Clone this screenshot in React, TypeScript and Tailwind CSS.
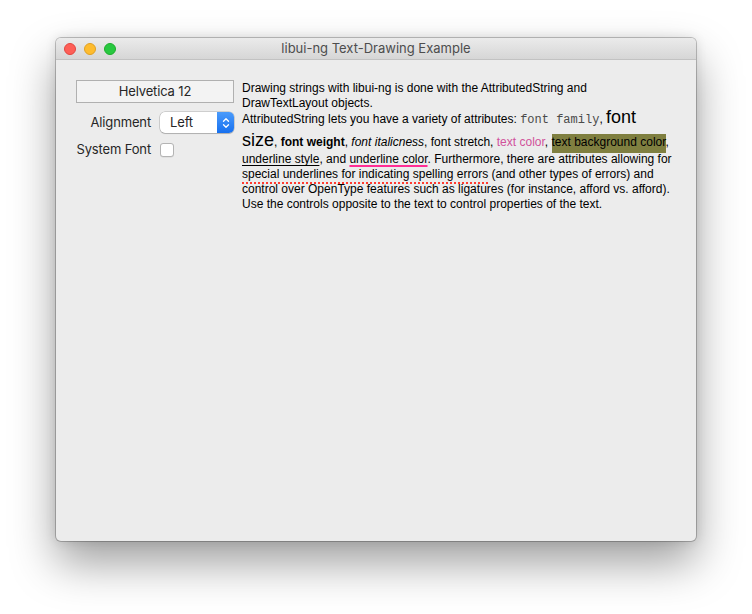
import React from "react";

const ui = { fontFamily: '"Inter", "Liberation Sans", sans-serif' };
const body = { fontFamily: '"Liberation Sans", Arial, sans-serif' };
const mono = { fontFamily: '"Liberation Mono", "Courier New", monospace' };

function TrafficLights() {
  return (
    <div className="flex items-center gap-[8px] pl-[8px]">
      <span className="w-[12px] h-[12px] rounded-full bg-[#fe5f57] border border-[#e2463f]" />
      <span className="w-[12px] h-[12px] rounded-full bg-[#febc2e] border border-[#dfa023]" />
      <span className="w-[12px] h-[12px] rounded-full bg-[#28c840] border border-[#1dad2b]" />
    </div>
  );
}

function Chevrons() {
  return (
    <svg width="8" height="12" viewBox="0 0 8 12" fill="none">
      <path d="M1.5 4.2 L4 1.7 L6.5 4.2" stroke="white" strokeWidth="1.3" strokeLinecap="round" strokeLinejoin="round" />
      <path d="M1.5 7.8 L4 10.3 L6.5 7.8" stroke="white" strokeWidth="1.3" strokeLinecap="round" strokeLinejoin="round" />
    </svg>
  );
}

function Controls() {
  return (
    <div className="w-[158px] flex flex-col text-[13px] text-[#262626] tracking-[-0.15px]" style={ui}>
      <div className="h-[23px] w-[158px] flex items-center justify-center bg-[#f3f3f3] border border-[#b0b0b0]">
        Helvetica 12
      </div>
      <div className="mt-[9px] grid grid-cols-[75px_74px] gap-x-[9px] items-center">
        <div className="flex justify-end whitespace-nowrap">Alignment</div>
        <div className="h-[21px] flex rounded-[5px] bg-white shadow-[0_0_0_0.5px_rgba(0,0,0,0.25),0_1px_1px_rgba(0,0,0,0.15)] overflow-hidden">
          <div className="flex-1 flex items-center pl-[10px]">Left</div>
          <div className="w-[17px] flex items-center justify-center bg-gradient-to-b from-[#4a9bfb] to-[#1670ef]">
            <Chevrons />
          </div>
        </div>
        <div className="flex justify-end whitespace-nowrap mt-[7px]">System Font</div>
        <div className="mt-[7px] h-[18px] flex items-center">
          <span className="w-[14px] h-[14px] rounded-[3px] bg-white border border-[#b4b4b4] shadow-[0_0.5px_0.5px_rgba(0,0,0,0.1)]" />
        </div>
      </div>
    </div>
  );
}

function Line({ children, className = "" }: { children: React.ReactNode; className?: string }) {
  return <div className={"h-[15px] leading-[15px] whitespace-nowrap " + className}>{children}</div>;
}

function TextArea() {
  return (
    <div className="flex flex-col text-[12px] text-black pt-[1px]" style={body}>
      <Line>Drawing strings with libui-ng is done with the AttributedString and</Line>
      <Line>DrawTextLayout objects.</Line>
      <Line className="mt-[1px]">
        AttributedString lets you have a variety of attributes:{" "}
        <span className="text-[#4a4a4a] text-[12px]" style={mono}>font family</span>,{" "}
        <span className="text-[18px] leading-[0]">font</span>
      </Line>
      <Line className="mt-[8px]">
        <span className="text-[18px] leading-[0]">size</span>, <span className="font-bold">font weight</span>,{" "}
        <span className="italic">font italicness</span>, font stretch,{" "}
        <span className="text-[#d1529b]">text color</span>,{" "}
        <span className="bg-[#7f7f40] pt-[1px] pb-[4px]">text background color</span>,
      </Line>
      <Line className="mt-[2px]">
        <span className="underline underline-offset-[2px]">underline style</span>, and{" "}
        <span className="underline decoration-[#ff2d95] decoration-[2px] underline-offset-[2px]">underline color</span>. Furthermore, there are attributes allowing for
      </Line>
      <Line>
        <span className="underline decoration-dotted decoration-[#ff3b30] decoration-[1.5px] underline-offset-[4px]">
          special underlines for indicating spelling errors
        </span>{" "}
        (and other types of errors) and
      </Line>
      <Line>control over OpenType features such as ligatures (for instance, afford vs. afford).</Line>
      <Line>Use the controls opposite to the text to control properties of the text.</Line>
    </div>
  );
}

export default function App() {
  return (
    <div className="w-[752px] h-[614px] bg-white pt-[38px] pl-[56px]">
      <div className="w-[640px] h-[503px] rounded-[5px] flex flex-col bg-[#ececec] shadow-[0_0_0_1px_rgba(0,0,0,0.22),0_22px_45px_rgba(0,0,0,0.38),0_0_12px_rgba(0,0,0,0.12)] overflow-hidden">
        <div className="h-[22px] shrink-0 flex items-center relative bg-gradient-to-b from-[#ebebeb] to-[#d6d6d6] border-b border-[#c2c2c2]">
          <TrafficLights />
          <div className="absolute inset-0 flex items-center justify-center text-[13px] text-[#4d4d4d]" style={ui}>
            libui-ng Text-Drawing Example
          </div>
        </div>
        <div className="flex pt-[20px] pl-[20px] gap-[8px]">
          <Controls />
          <TextArea />
        </div>
      </div>
    </div>
  );
}
